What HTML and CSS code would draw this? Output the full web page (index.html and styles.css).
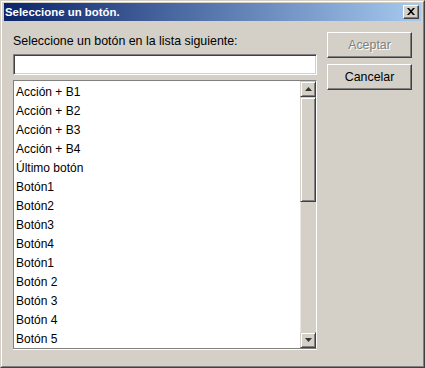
FILE: index.html
```html
<!DOCTYPE html>
<html lang="es">
<head>
<meta charset="utf-8">
<title>Seleccione un botón.</title>
<link rel="stylesheet" href="styles.css">
</head>
<body>
<div class="window">
  <div class="frame">
    <div class="titlebar">
      <span class="title">Seleccione un botón.</span>
      <div class="close">
        <svg width="8" height="7" viewBox="0 0 8 7"><path d="M0 0h2l2 2.2L6 0h2L5 3.5 8 7H6L4 4.8 2 7H0l3-3.5z" fill="#000"/></svg>
      </div>
    </div>
    <div class="client">
      <div class="main">
        <div class="label">Seleccione un botón en la lista siguiente:</div>
        <div class="field"></div>
        <div class="list">
          <ul class="items">
            <li>Acción + B1</li>
            <li>Acción + B2</li>
            <li>Acción + B3</li>
            <li>Acción + B4</li>
            <li>Último botón</li>
            <li>Botón1</li>
            <li>Botón2</li>
            <li>Botón3</li>
            <li>Botón4</li>
            <li>Botón1</li>
            <li>Botón 2</li>
            <li>Botón 3</li>
            <li>Botón 4</li>
            <li>Botón 5</li>
          </ul>
          <div class="scrollbar">
            <div class="sbtn"><svg width="7" height="4" viewBox="0 0 7 4"><path d="M3.5 0L7 4H0z" fill="#333"/></svg></div>
            <div class="thumb"></div>
            <div class="track"></div>
            <div class="sbtn"><svg width="7" height="4" viewBox="0 0 7 4"><path d="M0 0h7L3.5 4z" fill="#333"/></svg></div>
          </div>
        </div>
      </div>
      <div class="side">
        <div class="btn disabled">Aceptar</div>
        <div class="btn">Cancelar</div>
      </div>
    </div>
  </div>
</div>
</body>
</html>
```
FILE: styles.css
```css
html, body {
  margin: 0;
  padding: 0;
  background: #d4d0c8;
}
body {
  font-family: "Liberation Sans", Arial, sans-serif;
  font-size: 12px;
  color: #000;
}
.window {
  width: 425px;
  height: 368px;
  box-sizing: border-box;
  border: 1px solid;
  border-color: #d4d0c8 #404040 #404040 #d4d0c8;
  background: #d4d0c8;
}
.frame {
  height: 100%;
  box-sizing: border-box;
  border: 1px solid;
  border-color: #ffffff #808080 #808080 #ffffff;
  padding: 1px 2px 2px 2px;
  display: flex;
  flex-direction: column;
}
.titlebar {
  height: 18px;
  background: linear-gradient(to right, #0a246a, #a6caf0);
  display: flex;
  align-items: center;
  justify-content: space-between;
  padding: 0 2px 0 1px;
}
.title {
  color: #fff;
  font-weight: bold;
  font-size: 11.4px;
  line-height: 14px;
}
.close {
  width: 16px;
  height: 14px;
  box-sizing: border-box;
  background: #d4d0c8;
  border: 1px solid;
  border-color: #ffffff #404040 #404040 #ffffff;
  box-shadow: inset -1px -1px 0 #808080;
  display: flex;
  align-items: center;
  justify-content: center;
  padding: 0 1px 1px 0;
}
.close svg { display: block; }
.client {
  flex: 1;
  display: flex;
  gap: 10px;
  padding: 11px 9px 0 9px;
}
.main {
  width: 304px;
  display: flex;
  flex-direction: column;
}
.label {
  font-size: 12.4px;
  line-height: 14px;
  height: 14px;
  margin-top: 2px;
}
.field {
  margin-top: 6px;
  height: 21px;
  box-sizing: border-box;
  background: #fff;
  border: 1px solid;
  border-color: #808080 #ffffff #ffffff #808080;
  box-shadow: inset 1px 1px 0 #404040, inset -1px -1px 0 #d4d0c8;
}
.list {
  margin-top: 5px;
  height: 269px;
  box-sizing: border-box;
  background: #fff;
  border: 1px solid;
  border-color: #808080 #ffffff #808080 #808080;
  box-shadow: 0 1px 0 #ffffff;
  display: flex;
}
.items {
  list-style: none;
  margin: 0;
  padding: 2px 0 0 2px;
  flex: 1;
  overflow: hidden;
}
.items li {
  height: 19px;
  line-height: 19px;
  white-space: nowrap;
}
.scrollbar {
  width: 16px;
  display: flex;
  flex-direction: column;
  background: #d4d0c8;
}
.sbtn, .thumb {
  box-sizing: border-box;
  background: #d4d0c8;
  border: 1px solid;
  border-color: #d4d0c8 #404040 #404040 #d4d0c8;
  box-shadow: inset 1px 1px 0 #ffffff, inset -1px -1px 0 #808080;
}
.sbtn {
  height: 16px;
  display: flex;
  align-items: center;
  justify-content: center;
}
.sbtn svg { display: block; }
.thumb {
  height: 105px;
}
.track {
  flex: 1;
  border-left: 1px solid #eae8e3;
}
.side {
  width: 85px;
  display: flex;
  flex-direction: column;
  gap: 6px;
}
.btn {
  height: 26px;
  box-sizing: border-box;
  border: 1px solid;
  border-color: #ffffff #404040 #404040 #ffffff;
  box-shadow: inset -1px -1px 0 #808080;
  display: flex;
  align-items: center;
  justify-content: center;
  font-size: 12.4px;
  line-height: 14px;
}
.btn.disabled {
  color: #808080;
  text-shadow: 1px 1px 0 #ffffff;
}
```
